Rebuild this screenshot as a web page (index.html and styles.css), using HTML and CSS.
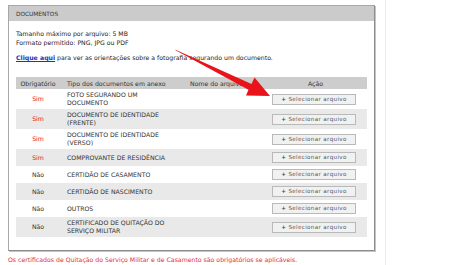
FILE: index.html
```html
<!DOCTYPE html>
<html lang="pt-BR">
<head>
    <meta charset="UTF-8">
    <meta name="viewport" content="width=device-width, initial-scale=1.0">
    <title>Documentos</title>
    <link rel="stylesheet" href="styles.css">
</head>
<body>
<div class="page">
    <div class="panel">
        <div class="panel-title">DOCUMENTOS</div>
        <div class="panel-body">
            <p class="info">Tamanho máximo por arquivo: 5 MB<br>Formato permitido: PNG, JPG ou PDF</p>
            <p class="hint"><a href="#">Clique aqui</a> para ver as orientações sobre a fotografia segurando um documento.</p>

            <table class="docs">
                <colgroup>
                    <col class="c-req">
                    <col class="c-type">
                    <col class="c-name">
                    <col class="c-action">
                </colgroup>
                <thead>
                    <tr>
                        <th class="col-req">Obrigatório</th>
                        <th class="col-type">Tipo dos documentos em anexo</th>
                        <th class="col-name">Nome do arquivo</th>
                        <th class="col-action">Ação</th>
                    </tr>
                </thead>
                <tbody>
                    <tr>
                        <td class="req yes">Sim</td>
                        <td>FOTO SEGURANDO UM<br>DOCUMENTO</td>
                        <td></td>
                        <td class="action"><button type="button"><span class="plus">+</span> Selecionar arquivo</button></td>
                    </tr>
                    <tr>
                        <td class="req yes">Sim</td>
                        <td>DOCUMENTO DE IDENTIDADE<br>(FRENTE)</td>
                        <td></td>
                        <td class="action"><button type="button"><span class="plus">+</span> Selecionar arquivo</button></td>
                    </tr>
                    <tr>
                        <td class="req yes">Sim</td>
                        <td>DOCUMENTO DE IDENTIDADE<br>(VERSO)</td>
                        <td></td>
                        <td class="action"><button type="button"><span class="plus">+</span> Selecionar arquivo</button></td>
                    </tr>
                    <tr>
                        <td class="req yes">Sim</td>
                        <td>COMPROVANTE DE RESIDÊNCIA</td>
                        <td></td>
                        <td class="action"><button type="button"><span class="plus">+</span> Selecionar arquivo</button></td>
                    </tr>
                    <tr>
                        <td class="req">Não</td>
                        <td>CERTIDÃO DE CASAMENTO</td>
                        <td></td>
                        <td class="action"><button type="button"><span class="plus">+</span> Selecionar arquivo</button></td>
                    </tr>
                    <tr>
                        <td class="req">Não</td>
                        <td>CERTIDÃO DE NASCIMENTO</td>
                        <td></td>
                        <td class="action"><button type="button"><span class="plus">+</span> Selecionar arquivo</button></td>
                    </tr>
                    <tr>
                        <td class="req">Não</td>
                        <td>OUTROS</td>
                        <td></td>
                        <td class="action"><button type="button"><span class="plus">+</span> Selecionar arquivo</button></td>
                    </tr>
                    <tr>
                        <td class="req">Não</td>
                        <td>CERTIFICADO DE QUITAÇÃO DO<br>SERVIÇO MILITAR</td>
                        <td></td>
                        <td class="action"><button type="button"><span class="plus">+</span> Selecionar arquivo</button></td>
                    </tr>
                </tbody>
            </table>
        </div>
    </div>
    <p class="warning">Os certificados de Quitação do Serviço Militar e de Casamento são obrigatórios se aplicáveis.</p>

    <svg class="arrow" width="474" height="265" viewBox="0 0 474 265">
        <polygon points="175,49.5 176,50.5 248.5,89.8 246,95.5 270,96 254.5,77.5 251.5,84 " fill="#e8141a"/>
    </svg>
</div>
</body>
</html>
```

FILE: styles.css
```css
body {
    margin: 0;
    font-family: "DejaVu Sans", Verdana, sans-serif;
    font-size: 6.2px;
    color: #222;
    background: #fff;
}
.page {
    position: relative;
    width: 386px;
    height: 265px;
    padding: 5px 0 0 8px;
    box-sizing: border-box;
    border-right: 1px solid #ebebeb;
    overflow: hidden;
}
.panel {
    width: 367px;
    box-sizing: border-box;
    border: 1px solid #a8a8a8;
    border-right-color: #8c8c8c;
    border-bottom-color: #8c8c8c;
    box-shadow: 1px 1px 0 #c4c4c4;
}
.panel-title {
    height: 15px;
    line-height: 16px;
    padding-left: 7px;
    background-color: #cbcbcb;
    font-size: 5.8px;
    color: #333;
}
.panel-body {
    padding: 8px 7px 13px 7px;
}
.info {
    margin: 0;
    line-height: 9px;
}
.hint {
    margin: 6px 0 0 0;
    line-height: 9px;
}
.hint a {
    color: #2233bb;
    font-weight: bold;
    text-decoration: underline;
}
table.docs {
    width: 351px;
    margin-top: 15px;
    border-collapse: collapse;
    table-layout: fixed;
}
.c-req {
    width: 44px;
}
.c-type {
    width: 115px;
}
.c-name {
    width: 87px;
}
.c-action {
    width: 105px;
}
.docs th {
    background-color: #cdcdcd;
    font-weight: normal;
    height: 12px;
    padding: 0 3px 0 7px;
    text-align: left;
    color: #333;
    white-space: nowrap;
    overflow: hidden;
}
.docs th.col-req {
    text-align: center;
    padding: 0;
}
.docs th.col-name {
    padding-left: 15px;
}
.docs th.col-action {
    text-align: center;
    padding: 0 0 0 2px;
}
.docs td {
    padding: 2px 3px 2px 7px;
    line-height: 8px;
    height: 13px;
    vertical-align: middle;
    color: #333;
}
.docs tbody tr:nth-child(even) td {
    background-color: #e9e9e9;
}
.docs td.req {
    text-align: center;
    padding-left: 0;
    padding-right: 0;
}
.docs td.yes {
    color: #e0141e;
}
.docs td.action {
    text-align: right;
    padding-right: 11px;
}
.docs button {
    width: 84px;
    height: 11px;
    padding: 0;
    background-color: #f1f1f1;
    border: 1px solid #b9b9b9;
    border-radius: 0;
    font-family: "DejaVu Sans", Verdana, sans-serif;
    font-size: 5.6px;
    letter-spacing: 0.35px;
    color: #555;
    line-height: 9px;
    cursor: pointer;
}
.docs button .plus {
    font-weight: bold;
    color: #444;
}
.warning {
    margin: 5px 0 0 0;
    font-size: 6.2px;
    line-height: 8px;
    color: #e0303a;
    white-space: nowrap;
}
.arrow {
    position: absolute;
    left: 0;
    top: 0;
    pointer-events: none;
}
```
